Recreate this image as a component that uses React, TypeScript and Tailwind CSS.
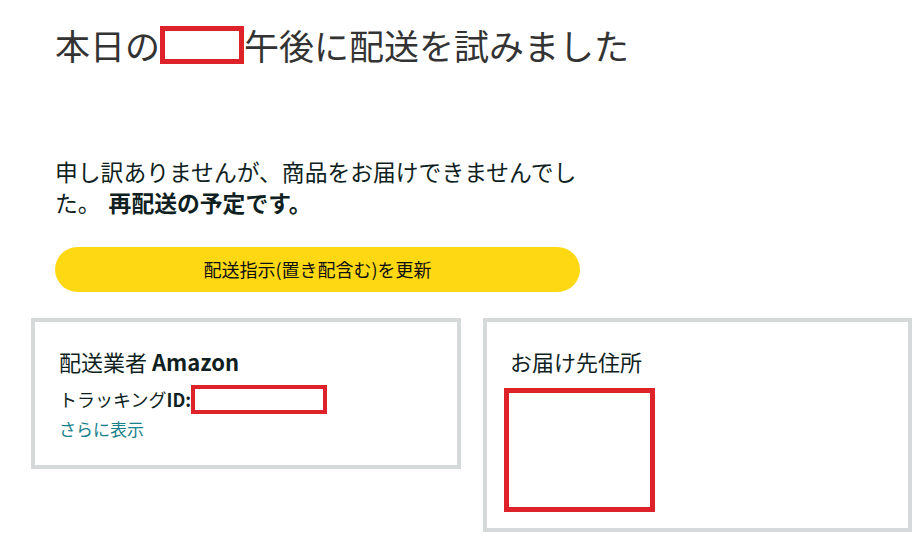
const font = { fontFamily: '"Noto Sans CJK JP", "Noto Sans", sans-serif' }

function Redact({ className }: { className: string }) {
  return <span className={`inline-block border-[#dd2229] bg-white ${className}`} />
}

export default function App() {
  return (
    <div className="min-h-[545px] w-[919px] bg-white text-[#0f1f22]" style={font}>
      <div className="pl-[55px] pt-[24px]">
        <h1 className="flex items-center text-[35px] leading-[42px] font-normal text-[#333333]">
          <span>本日の</span>
          <Redact className="h-[38px] w-[84px] border-[5px]" />
          <span>午後に配送を試みました</span>
        </h1>

        <p className="mt-[90px] w-[530px] text-[22.8px] leading-[31px]">
          申し訳ありませんが、商品をお届けできませんでした。
          <span className="ml-[8px] font-bold">再配送の予定です。</span>
        </p>

        <button className="mt-[29px] flex h-[45px] w-[525px] items-center justify-center rounded-full bg-[#ffd814] text-[18px] text-[#0f1111]">
          配送指示(置き配含む)を更新
        </button>
      </div>

      <div className="mt-[26px] flex items-start gap-[22px] pl-[31px]">
        <div className="w-[430px] border-4 border-[#d5d9d9] pb-[24px] pl-[24px] pt-[25px]">
          <h2 className="text-[22px] leading-[29px]">
            配送業者 <span className="font-semibold">Amazon</span>
          </h2>
          <div className="mt-[9px] flex items-center text-[18px] leading-[29px]">
            <span>トラッキング</span>
            <span className="font-bold">ID:</span>
            <Redact className="h-[29px] w-[136px] border-4" />
          </div>
          <div className="mt-[3px] text-[17px] leading-[24px] text-[#1a7f8c]">さらに表示</div>
        </div>

        <div className="w-[429px] border-4 border-[#d5d9d9] pb-[11px] pl-[23px] pt-[25px]">
          <h2 className="text-[22px] leading-[29px]">お届け先住所</h2>
          <Redact className="-ml-[6px] mt-[12px] block h-[124px] w-[151px] border-[5px]" />
        </div>
      </div>
    </div>
  )
}
